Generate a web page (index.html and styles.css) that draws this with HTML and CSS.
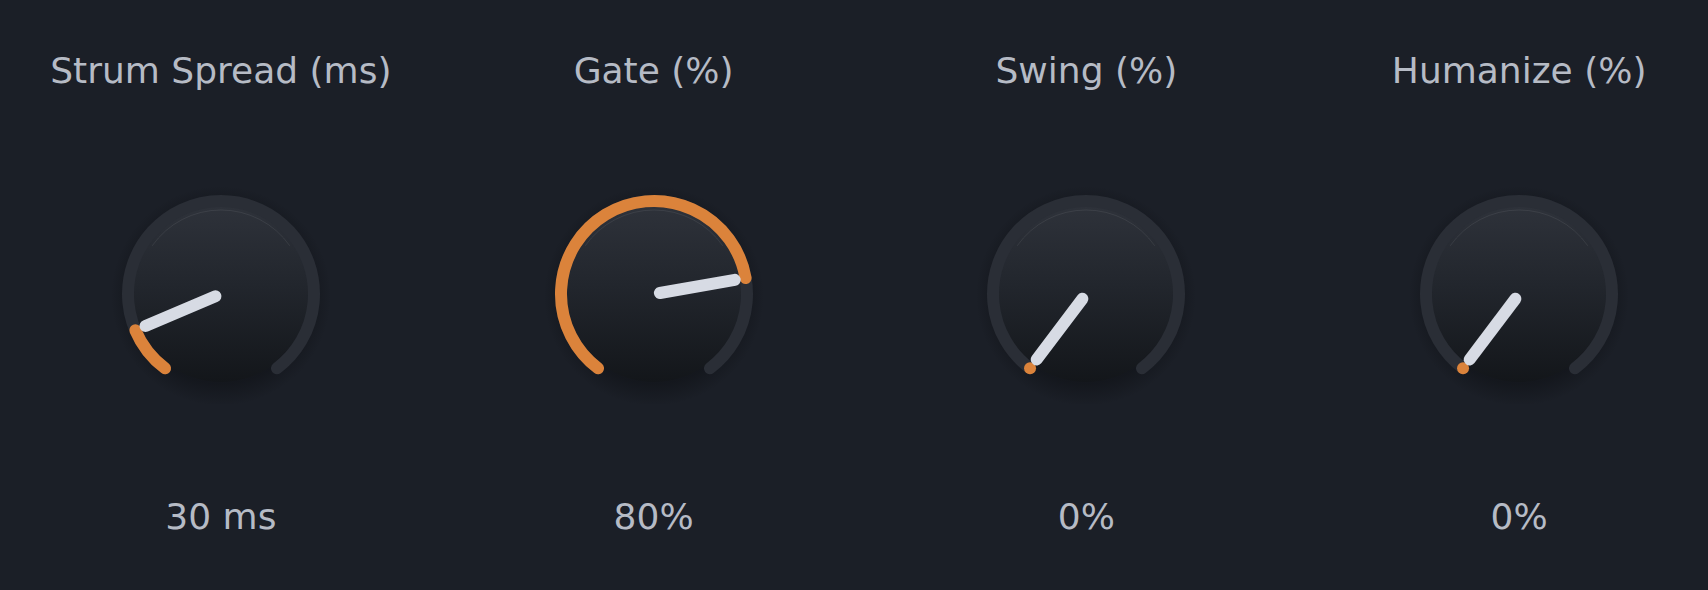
FILE: index.html
```html
<!DOCTYPE html>
<html lang="en">
<head>
    <meta charset="UTF-8">
    <meta name="viewport" content="width=device-width, initial-scale=1.0">
    <title>Arp Feel</title>
    <link rel="stylesheet" href="styles.css">
</head>
<body>
    <!-- shared gradients for every knob -->
    <svg class="defs" width="0" height="0" aria-hidden="true">
        <defs>
            <linearGradient id="knobBody" x1="0" y1="0" x2="0" y2="1">
                <stop offset="0" stop-color="#2e323a"/>
                <stop offset="0.45" stop-color="#22262d"/>
                <stop offset="1" stop-color="#13161a"/>
            </linearGradient>
            <radialGradient id="knobHalo">
                <stop offset="0.8" stop-color="#0c0e12" stop-opacity="0.45"/>
                <stop offset="1" stop-color="#0c0e12" stop-opacity="0"/>
            </radialGradient>
        </defs>
    </svg>

    <div class="panel" id="panel"></div>

    <script>
        // sweep of the dial, degrees from 12 o'clock
        const ARC_START = -143;
        const ARC_END = 143;
        const C = 110;       // svg centre
        const R_TRACK = 93;  // track radius

        const knobs = [
            { label: "Strum Spread (ms)", value: "30 ms", pos: 0.105 },
            { label: "Gate (%)", value: "80%", pos: 0.78 },
            { label: "Swing (%)", value: "0%", pos: 0 },
            { label: "Humanize (%)", value: "0%", pos: 0 },
        ];

        function pt(r, deg) {
            const a = deg * Math.PI / 180;
            return [C + r * Math.sin(a), C - r * Math.cos(a)];
        }

        function arc(r, from, to) {
            const [x1, y1] = pt(r, from);
            const [x2, y2] = pt(r, to);
            const large = (to - from) > 180 ? 1 : 0;
            return `M${x1.toFixed(2)} ${y1.toFixed(2)} A${r} ${r} 0 ${large} 1 ${x2.toFixed(2)} ${y2.toFixed(2)}`;
        }

        function knobSvg(pos) {
            const angle = ARC_START + pos * (ARC_END - ARC_START);
            const [sx, sy] = pt(R_TRACK, ARC_START);
            const [px1, py1] = pt(6, angle);
            const [px2, py2] = pt(82, angle);

            const fill = pos > 0
                ? `<path class="fill" d="${arc(R_TRACK, ARC_START, angle)}"/>`
                : `<circle class="fill-dot" cx="${sx}" cy="${sy}" r="6"/>`;

            return `
            <svg class="dial" viewBox="0 0 220 220" width="220" height="220">
                <circle cx="110" cy="112" r="110" fill="url(#knobHalo)"/>
                <circle cx="110" cy="110" r="88" fill="url(#knobBody)"/>
                <path class="track" d="${arc(R_TRACK, ARC_START, ARC_END)}"/>
                <path class="rim" d="${arc(84, -55, 55)}"/>
                ${fill}
                <line class="pointer" x1="${px1}" y1="${py1}" x2="${px2}" y2="${py2}"/>
            </svg>`;
        }

        const panel = document.getElementById("panel");
        knobs.forEach(k => {
            const el = document.createElement("div");
            el.className = "knob";
            el.innerHTML = `
                <div class="knob-label">${k.label}</div>
                ${knobSvg(k.pos)}
                <div class="knob-value">${k.value}</div>`;
            panel.appendChild(el);
        });
    </script>
</body>
</html>
```

FILE: styles.css
```css
body {
    margin: 0;
    background-color: #1b1f27;
    font-family: "DejaVu Sans", "Liberation Sans", sans-serif;
    color: #b6bbc5;
}
.defs {
    position: absolute;
}
.panel {
    display: grid;
    grid-template-columns: repeat(4, 1fr);
    column-gap: 55px;
    padding: 50px 0 0 32px;
}
.knob {
    display: flex;
    flex-direction: column;
    align-items: center;
    gap: 92px;
}
.knob-label,
.knob-value {
    font-size: 36px;
    line-height: 42px;
    white-space: nowrap;
}
.dial {
    display: block;
}
.track {
    fill: none;
    stroke: #2a2e36;
    stroke-width: 12;
    stroke-linecap: round;
}
.rim {
    fill: none;
    stroke: rgba(255, 255, 255, 0.07);
    stroke-width: 1;
}
.fill {
    fill: none;
    stroke: #db833b;
    stroke-width: 12;
    stroke-linecap: round;
}
.fill-dot {
    fill: #db833b;
}
.pointer {
    stroke: #d7dbe4;
    stroke-width: 12;
    stroke-linecap: round;
}
```
